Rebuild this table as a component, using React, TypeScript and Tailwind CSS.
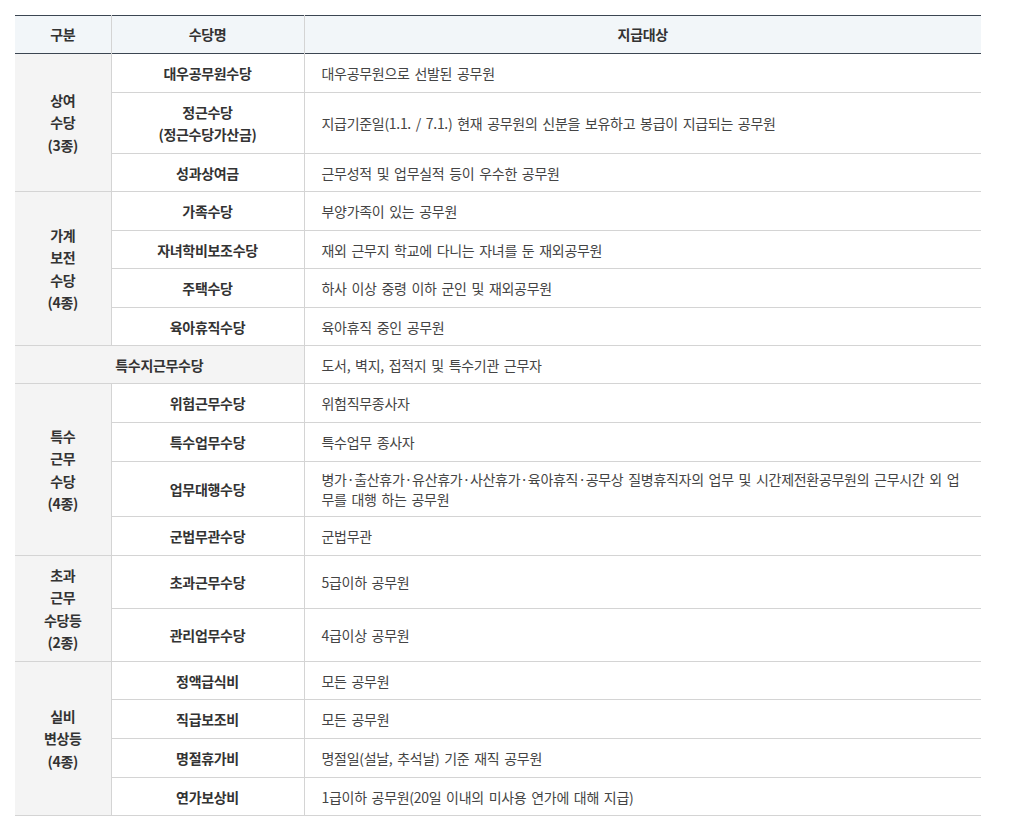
import React from "react";

type Row = {
  group?: { label: string[]; span: number };
  name: string[];
  target: string;
  h: string;
  wide?: boolean;
};

const rows: Row[] = [
  { group: { label: ["상여", "수당", "(3종)"], span: 3 }, name: ["대우공무원수당"], target: "대우공무원으로 선발된 공무원", h: "h-[39px]" },
  { name: ["정근수당", "(정근수당가산금)"], target: "지급기준일(1.1. / 7.1.) 현재 공무원의 신분을 보유하고 봉급이 지급되는 공무원", h: "h-[61px]" },
  { name: ["성과상여금"], target: "근무성적 및 업무실적 등이 우수한 공무원", h: "h-[38px]" },
  { group: { label: ["가계", "보전", "수당", "(4종)"], span: 4 }, name: ["가족수당"], target: "부양가족이 있는 공무원", h: "h-[39px]" },
  { name: ["자녀학비보조수당"], target: "재외 근무지 학교에 다니는 자녀를 둔 재외공무원", h: "h-[38px]" },
  { name: ["주택수당"], target: "하사 이상 중령 이하 군인 및 재외공무원", h: "h-[39px]" },
  { name: ["육아휴직수당"], target: "육아휴직 중인 공무원", h: "h-[38px]" },
  { name: ["특수지근무수당"], target: "도서, 벽지, 접적지 및 특수기관 근무자", h: "h-[38px]", wide: true },
  { group: { label: ["특수", "근무", "수당", "(4종)"], span: 4 }, name: ["위험근무수당"], target: "위험직무종사자", h: "h-[39px]" },
  { name: ["특수업무수당"], target: "특수업무 종사자", h: "h-[39px]" },
  { name: ["업무대행수당"], target: "병가·출산휴가·유산휴가·사산휴가·육아휴직·공무상 질병휴직자의 업무 및 시간제전환공무원의 근무시간 외 업무를 대행 하는 공무원", h: "h-[55px]" },
  { name: ["군법무관수당"], target: "군법무관", h: "h-[39px]" },
  { group: { label: ["초과", "근무", "수당등", "(2종)"], span: 2 }, name: ["초과근무수당"], target: "5급이하 공무원", h: "h-[53px]" },
  { name: ["관리업무수당"], target: "4급이상 공무원", h: "h-[53px]" },
  { group: { label: ["실비", "변상등", "(4종)"], span: 4 }, name: ["정액급식비"], target: "모든 공무원", h: "h-[38px]" },
  { name: ["직급보조비"], target: "모든 공무원", h: "h-[39px]" },
  { name: ["명절휴가비"], target: "명절일(설날, 추석날) 기준 재직 공무원", h: "h-[39px]" },
  { name: ["연가보상비"], target: "1급이하 공무원(20일 이내의 미사용 연가에 대해 지급)", h: "h-[38px]" },
];

export default function App() {
  return (
    <div className="bg-white min-h-[835px] pt-[15px] pl-[15px] font-['Noto_Sans_CJK_KR',sans-serif] text-[14px] tracking-[-0.3px] [word-spacing:2px]">
      <table className="w-[966px] table-fixed border-collapse">
        <colgroup>
          <col className="w-[96px]" />
          <col className="w-[193px]" />
          <col />
        </colgroup>
        <thead>
          <tr className="h-[38px] bg-[#f2f6f9] border-t border-b border-[#3c4652]">
            <th className="p-0 font-bold text-[#333] text-center border-r border-[#d4d4d4]">구분</th>
            <th className="p-0 font-bold text-[#333] text-center border-r border-[#d4d4d4]">수당명</th>
            <th className="p-0 font-bold text-[#333] text-center">지급대상</th>
          </tr>
        </thead>
        <tbody>
          {rows.map((r, i) => (
            <tr key={i} className={`${r.h} border-b border-[#d4d4d4]`}>
              {r.group && (
                <td
                  rowSpan={r.group.span}
                  className="p-0 bg-[#f4f4f4] border-r border-[#d4d4d4] text-center font-bold text-[#333] leading-[22.5px]"
                >
                  {r.group.label.map((l, j) => (
                    <div key={j}>{l}</div>
                  ))}
                </td>
              )}
              <td
                colSpan={r.wide ? 2 : 1}
                className={`p-0 border-r border-[#d4d4d4] text-center font-bold text-[#333] leading-[22px] ${r.wide ? "bg-[#f4f4f4]" : "bg-white"}`}
              >
                {r.name.map((n, j) => (
                  <div key={j}>{n}</div>
                ))}
              </td>
              <td className="py-0 pl-[17px] pr-[16px] text-left text-[#444] leading-[20px]">{r.target}</td>
            </tr>
          ))}
        </tbody>
      </table>
    </div>
  );
}
